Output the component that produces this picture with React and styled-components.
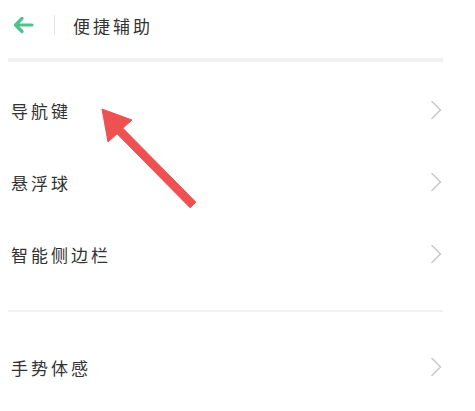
import React from 'react'
import styled, { createGlobalStyle } from 'styled-components'

const Global = createGlobalStyle`
  html, body {
    margin: 0;
    padding: 0;
    background: #fff;
  }
  body {
    font-family: "Noto Sans CJK SC", "Noto Sans", sans-serif;
    color: #333;
  }
`

const items = [
  { group: 0, label: '导航键' },
  { group: 0, label: '悬浮球' },
  { group: 0, label: '智能侧边栏' },
  { group: 1, label: '手势体感' },
]

const App = () => (
  <Page>
    <Global />
    <Header>
      <BackIcon />
      <HeaderDivider />
      <Title>便捷辅助</Title>
    </Header>
    <HeaderRule />
    <Group>
      {items.filter(i => i.group === 0).map(i => (
        <Row key={i.label} label={i.label} />
      ))}
    </Group>
    <Separator />
    <Group>
      {items.filter(i => i.group === 1).map(i => (
        <Row key={i.label} label={i.label} />
      ))}
    </Group>
    <Pointer />
  </Page>
)

export default App

const Row = ({ label }) => (
  <RowBox>
    <Label>{label}</Label>
    <Chevron />
  </RowBox>
)

const BackIcon = () => (
  <BackSvg width="22" height="18" viewBox="0 0 22 18">
    <path
      d="M20 9H3.5M10 2.5L3.5 9l6.5 6.5"
      fill="none"
      stroke="#4ec28b"
      strokeWidth="3.2"
      strokeLinecap="round"
      strokeLinejoin="round"
    />
  </BackSvg>
)

const Chevron = () => (
  <svg width="12" height="20" viewBox="0 0 12 20">
    <path
      d="M2 1.5L10.5 10L2 18.5"
      fill="none"
      stroke="#c9c9c9"
      strokeWidth="1.6"
      strokeLinecap="round"
      strokeLinejoin="round"
    />
  </svg>
)

const Pointer = () => (
  <PointerSvg width="475" height="411" viewBox="0 0 475 411">
    <polygon
      points="102,109 132,120 122.9,128.2 195.9,202.2 190.1,207.8 117.1,133.8 108,142"
      fill="#ee5151"
      stroke="#ee5151"
      strokeWidth="1"
      strokeLinejoin="round"
    />
  </PointerSvg>
)

const Page = styled.div`
  position: relative;
  width: 475px;
  height: 411px;
  overflow: hidden;
  background: #fff;
`

const Header = styled.div`
  display: flex;
  align-items: center;
  height: 50px;
  padding-left: 12px;
`

const BackSvg = styled.svg`
  display: block;
`

const HeaderDivider = styled.div`
  width: 1px;
  height: 20px;
  margin-left: 20px;
  background: #e4e4e4;
`

const Title = styled.div`
  margin-left: 18px;
  font-size: 17px;
  letter-spacing: 3px;
  color: #333;
`

const HeaderRule = styled.div`
  height: 4px;
  margin: 8px 32px 0 8px;
  background: #f1f1f1;
`

const Group = styled.div`
  display: flex;
  flex-direction: column;
  padding-top: 12px;
`

const RowBox = styled.div`
  display: flex;
  align-items: center;
  justify-content: space-between;
  height: 72px;
  padding: 0 33px 0 11px;
`

const Label = styled.div`
  font-size: 17px;
  letter-spacing: 3px;
  color: #333;
`

const Separator = styled.div`
  height: 2px;
  margin: 20px 32px 7px 8px;
  background: #f1f1f1;
`

const PointerSvg = styled.svg`
  position: absolute;
  left: 0;
  top: 0;
  pointer-events: none;
`
